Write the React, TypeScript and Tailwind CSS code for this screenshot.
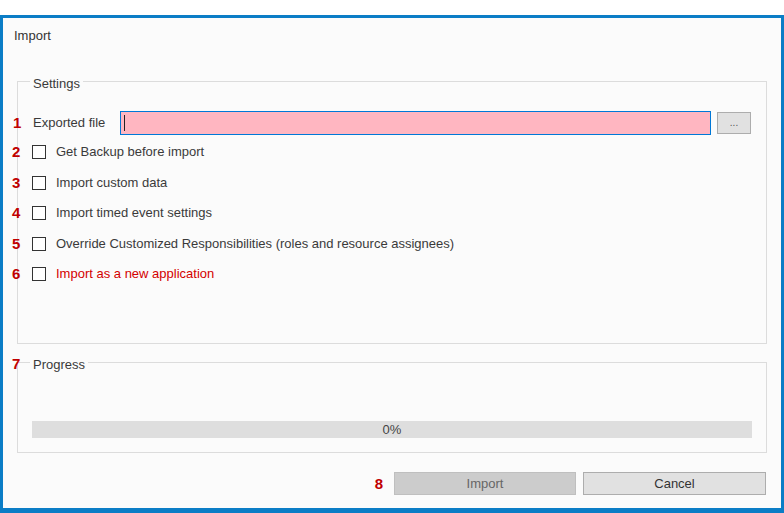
const font = { fontFamily: '"Liberation Sans", Arial, sans-serif' }

type Option = {
    num: string,
    label: string,
    red?: boolean
}

const options: Option[] = [
    { num: "2", label: "Get Backup before import" },
    { num: "3", label: "Import custom data" },
    { num: "4", label: "Import timed event settings" },
    { num: "5", label: "Override Customized Responsibilities (roles and resource assignees)" },
    { num: "6", label: "Import as a new application", red: true },
]

const Num = ({ n, className }: { n: string, className: string }) => {
    return (
        <span className={"absolute text-[15px] leading-[16px] font-bold text-[#c00000] " + className}>{n}</span>
    )
}

const CheckRow = ({ num, label, red }: Option) => {
    return (
        <div className="relative flex items-center h-[30.5px] pl-[14px]">
            <Num n={num} className="left-[-6px] top-[7px]" />
            <span className="w-[14px] h-[14px] border border-[#333333] bg-white"></span>
            <span className={"ml-[10px] " + (red ? "text-[#d40000]" : "text-[#3a3a3a]")}>{label}</span>
        </div>
    )
}

const App = () => {
    return (
        <div className="w-[784px] h-[513px] bg-white pt-[15px] text-[13px] leading-[16px]" style={font}>
            <div className="h-[498px] border-[3px] border-b-[5px] border-[#0b7dc6] bg-[#fbfbfb] flex flex-col">
                <div className="pt-[10px] pl-[11px] h-[26px] text-[#333333]">Import</div>

                <fieldset className="mt-[26px] ml-[14px] mr-[14px] h-[274px] border border-[#dcdcdc]">
                    <legend className="ml-[12px] px-[3px] pt-[6px] leading-[16px] text-[#3a3a3a]">Settings</legend>

                    <div className="relative flex items-center mt-[19px] h-[24px] pl-[15px] pr-[15px]">
                        <Num n="1" className="left-[-5px] top-[4px]" />
                        <span className="w-[87px] text-[#3a3a3a]">Exported file</span>
                        <div className="flex-1 h-[24px] border border-[#0078d7] bg-[#ffb6c1] flex items-center">
                            <span className="ml-[3px] w-[1px] h-[16px] bg-[#222222]"></span>
                        </div>
                        <button className="ml-[6px] w-[34px] h-[22px] border border-[#adadad] bg-[#e1e1e1] text-[#555555] text-[10px] leading-[10px]">...</button>
                    </div>

                    <div className="mt-[2px]">
                        {options.map((item, index) => {
                            return (<CheckRow {...item} key={index} />)
                        })}
                    </div>
                </fieldset>

                <div className="relative mt-[7px] ml-[14px] mr-[14px]">
                    <Num n="7" className="left-[-5px] top-[5px]" />
                    <fieldset className="h-[102px] border border-[#dcdcdc]">
                        <legend className="ml-[12px] px-[3px] pt-[6px] leading-[16px] text-[#3a3a3a]">Progress</legend>
                        <div className="mt-[48px] mx-[14px] h-[17px] bg-[#dedede] flex items-center justify-center text-[#444444]">0%</div>
                    </fieldset>
                </div>

                <div className="mt-[19px] pr-[15px] flex items-center justify-end">
                    <span className="text-[15px] leading-[16px] font-bold text-[#c00000] mr-[11px]">8</span>
                    <button className="w-[182px] h-[23px] border border-[#bfbfbf] bg-[#cccccc] text-[#666666]">Import</button>
                    <button className="ml-[7px] w-[183px] h-[23px] border border-[#adadad] bg-[#e1e1e1] text-[#333333]">Cancel</button>
                </div>
            </div>
        </div>
    )
}

export default App
